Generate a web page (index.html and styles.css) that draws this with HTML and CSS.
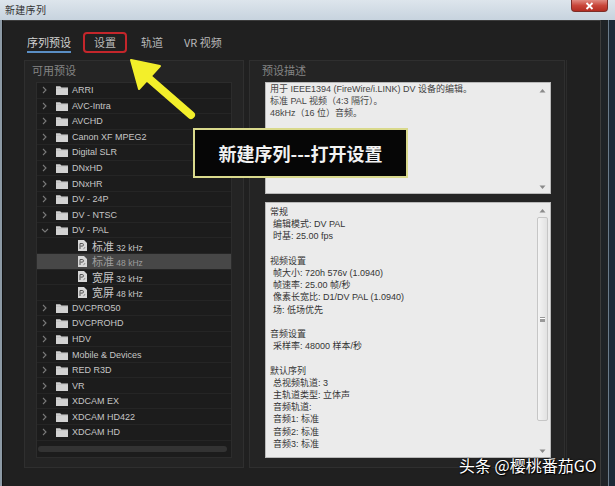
FILE: index.html
```html
<!DOCTYPE html>
<html lang="zh">
<head>
<meta charset="utf-8">
<title>新建序列</title>
<link rel="stylesheet" href="styles.css">
</head>
<body>
<svg class="defs" width="0" height="0" aria-hidden="true">
  <symbol id="chev" viewBox="0 0 5 8"><polyline points="1,1 4,4 1,7" fill="none" stroke="#7a7a7a" stroke-width="1.1"/></symbol>
  <symbol id="chevd" viewBox="0 0 8 5"><polyline points="1,1 4,4 7,1" fill="none" stroke="#7a7a7a" stroke-width="1.1"/></symbol>
  <symbol id="folder" viewBox="0 0 12 10"><path d="M0 1.2h4.2l1.2 1.3H12V10H0z" fill="#d2d2d2"/><path d="M0 3.4h12" stroke="#b8b8b8" stroke-width="0.6"/></symbol>
  <symbol id="file" viewBox="0 0 9 11"><path d="M0 0h6l3 3v8H0z" fill="#d8d8d8"/><path d="M2 9V3.5h2.2a1.3 1.3 0 0 1 0 2.6H2.4" fill="none" stroke="#555" stroke-width="1"/><path d="M5.5 9.2l1.6-2.2" stroke="#777" stroke-width="0.8"/></symbol>
  <symbol id="up" viewBox="0 0 7 5"><path d="M0.5 4.5L3.5 1l3 3.5z" fill="#8a8a8a"/></symbol>
  <symbol id="down" viewBox="0 0 7 5"><path d="M0.5 0.5L3.5 4l3-3.5z" fill="#8a8a8a"/></symbol>
</svg>

<div class="titlebar">
  <span class="title">新建序列</span>
  <span class="close"><svg width="9" height="8" viewBox="0 0 9 8"><path d="M1.5 1l6 6M7.5 1l-6 6" stroke="#fff" stroke-width="1.8"/></svg></span>
</div>

<div class="frame">
  <div class="lframe"></div>
  <div class="dialog">
    <nav class="tabs">
      <span class="tab active"><span class="ul">序列预设</span></span>
      <span class="tab boxed">设置</span>
      <span class="tab t3">轨道</span>
      <span class="tab t4">VR 视频</span>
    </nav>

    <div class="content">
      <section class="panel left">
        <div class="plabel">可用预设</div>
        <div class="tree">
          <div class="row"><svg class="chev"><use href="#chev"/></svg><svg class="fold"><use href="#folder"/></svg><span>ARRI</span></div>
          <div class="row"><svg class="chev"><use href="#chev"/></svg><svg class="fold"><use href="#folder"/></svg><span>AVC-Intra</span></div>
          <div class="row"><svg class="chev"><use href="#chev"/></svg><svg class="fold"><use href="#folder"/></svg><span>AVCHD</span></div>
          <div class="row"><svg class="chev"><use href="#chev"/></svg><svg class="fold"><use href="#folder"/></svg><span>Canon XF MPEG2</span></div>
          <div class="row"><svg class="chev"><use href="#chev"/></svg><svg class="fold"><use href="#folder"/></svg><span>Digital SLR</span></div>
          <div class="row"><svg class="chev"><use href="#chev"/></svg><svg class="fold"><use href="#folder"/></svg><span>DNxHD</span></div>
          <div class="row"><svg class="chev"><use href="#chev"/></svg><svg class="fold"><use href="#folder"/></svg><span>DNxHR</span></div>
          <div class="row"><svg class="chev"><use href="#chev"/></svg><svg class="fold"><use href="#folder"/></svg><span>DV - 24P</span></div>
          <div class="row"><svg class="chev"><use href="#chev"/></svg><svg class="fold"><use href="#folder"/></svg><span>DV - NTSC</span></div>
          <div class="row"><svg class="chevd"><use href="#chevd"/></svg><svg class="fold"><use href="#folder"/></svg><span>DV - PAL</span></div>
          <div class="row child"><svg class="file"><use href="#file"/></svg><span><b>标准</b> 32 kHz</span></div>
          <div class="row child sel"><svg class="file"><use href="#file"/></svg><span><b>标准</b> 48 kHz</span></div>
          <div class="row child"><svg class="file"><use href="#file"/></svg><span><b>宽屏</b> 32 kHz</span></div>
          <div class="row child"><svg class="file"><use href="#file"/></svg><span><b>宽屏</b> 48 kHz</span></div>
          <div class="row"><svg class="chev"><use href="#chev"/></svg><svg class="fold"><use href="#folder"/></svg><span>DVCPRO50</span></div>
          <div class="row"><svg class="chev"><use href="#chev"/></svg><svg class="fold"><use href="#folder"/></svg><span>DVCPROHD</span></div>
          <div class="row"><svg class="chev"><use href="#chev"/></svg><svg class="fold"><use href="#folder"/></svg><span>HDV</span></div>
          <div class="row"><svg class="chev"><use href="#chev"/></svg><svg class="fold"><use href="#folder"/></svg><span>Mobile &amp; Devices</span></div>
          <div class="row"><svg class="chev"><use href="#chev"/></svg><svg class="fold"><use href="#folder"/></svg><span>RED R3D</span></div>
          <div class="row"><svg class="chev"><use href="#chev"/></svg><svg class="fold"><use href="#folder"/></svg><span>VR</span></div>
          <div class="row"><svg class="chev"><use href="#chev"/></svg><svg class="fold"><use href="#folder"/></svg><span>XDCAM EX</span></div>
          <div class="row"><svg class="chev"><use href="#chev"/></svg><svg class="fold"><use href="#folder"/></svg><span>XDCAM HD422</span></div>
          <div class="row"><svg class="chev"><use href="#chev"/></svg><svg class="fold"><use href="#folder"/></svg><span>XDCAM HD</span></div>
          <div class="hscroll"></div>
        </div>
      </section>

      <section class="panel right">
        <div class="plabel">预设描述</div>
        <div class="box desc">
          <div class="text">
            <p>用于 IEEE1394 (FireWire/i.LINK) DV 设备的编辑。</p>
            <p>标准 PAL 视频（4:3 隔行）。</p>
            <p>48kHz（16 位）音频。</p>
          </div>
          <div class="vscroll plain">
            <svg class="arr"><use href="#up"/></svg>
            <svg class="arr"><use href="#down"/></svg>
          </div>
        </div>
        <div class="box details">
          <div class="text">
            <p>常规</p>
            <p class="in">编辑模式: DV PAL</p>
            <p class="in">时基: 25.00 fps</p>
            <p class="gap"></p>
            <p>视频设置</p>
            <p class="in">帧大小: 720h 576v (1.0940)</p>
            <p class="in">帧速率: 25.00 帧/秒</p>
            <p class="in">像素长宽比: D1/DV PAL (1.0940)</p>
            <p class="in">场: 低场优先</p>
            <p class="gap"></p>
            <p>音频设置</p>
            <p class="in">采样率: 48000 样本/秒</p>
            <p class="gap"></p>
            <p>默认序列</p>
            <p class="in">总视频轨道: 3</p>
            <p class="in">主轨道类型: 立体声</p>
            <p class="in">音频轨道:</p>
            <p class="in">音频1: 标准</p>
            <p class="in">音频2: 标准</p>
            <p class="in">音频3: 标准</p>
          </div>
          <div class="vscroll">
            <svg class="arr"><use href="#up"/></svg>
            <div class="thumb"><span class="grip"></span></div>
            <svg class="arr"><use href="#down"/></svg>
          </div>
        </div>
      </section>
      <div class="side"></div>
    </div>
  </div>
  <div class="rframe"></div>
</div>

<div class="callout">新建序列---打开设置</div>
<svg class="arrow" width="80" height="75" viewBox="0 0 80 75">
  <path d="M70 64L24 24" stroke="#f3ef2a" stroke-width="8" stroke-linecap="round"/>
  <path d="M10 9L39 15L18 38Z" fill="#f3ef2a" stroke="#f3ef2a" stroke-width="2" stroke-linejoin="round"/>
</svg>
<div class="watermark">头条 @樱桃番茄GO</div>
</body>
</html>
```

FILE: styles.css
```css
* { box-sizing: border-box; margin: 0; padding: 0; }
html, body { width: 615px; height: 486px; overflow: hidden; }
body {
  position: relative;
  background: #1c2530;
  font-family: "Liberation Sans", "Noto Sans CJK SC", sans-serif;
  color: #c4c4c4;
}
.defs { position: absolute; width: 0; height: 0; }

/* title bar */
.titlebar {
  height: 20px;
  display: flex;
  justify-content: space-between;
  align-items: flex-start;
  padding-left: 5px;
  background: linear-gradient(#dde5ec, #c7d3de);
}
.title {
  font-family: "Noto Sans CJK SC", sans-serif;
  font-size: 10px;
  line-height: 20px;
  color: #333;
  letter-spacing: 0.3px;
}
.close {
  width: 37px;
  height: 12px;
  margin-right: 7px;
  display: flex;
  align-items: center;
  justify-content: center;
  background: linear-gradient(#e08a80, #c9463a 50%, #b32d22);
  border: 1px solid #7d2e28;
  border-top: none;
  border-radius: 0 0 4px 4px;
}

/* frame */
.frame { display: flex; height: 466px; }
.lframe { width: 3px; background: #8d9aa6; border-right: 1px solid #111; }
.rframe {
  width: 15px;
  background: #1f2327;
  border-left: 1px solid #3c3c3c;
  box-shadow: inset -6px 0 0 #1d2a37, inset -7px 0 0 #6b7c8c;
}
.dialog {
  flex: 1;
  background: #202020;
  border-top: 1px solid #3d3d3d;
  padding: 11px 0 0 21px;
}

/* tabs */
.tabs {
  display: flex;
  height: 21px;
  font-family: "Noto Sans CJK SC", sans-serif;
  font-size: 11px;
  color: #b8b8b8;
}
.tab { padding: 0 3px; line-height: 20px; }
.tab.active { color: #d2d2d2; }
.ul { display: inline-block; height: 21px; border-bottom: 2px solid #5a8ec4; }
.boxed {
  margin-left: 9px;
  width: 44px;
  text-align: center;
  border: 2px solid #c4262b;
  border-radius: 4px;
  line-height: 17px;
  padding: 0;
}
.t3 { margin-left: 11px; }
.t4 { margin-left: 15px; }

/* content */
.content {
  margin-top: 7px;
  display: grid;
  grid-template-columns: 220px 316px 1fr;
  column-gap: 5px;
  height: 408px;
}
.panel {
  background: #242424;
  border: 1px solid #2f2f2f;
}
.side { border-left: 1px solid #2c2c2c; margin-left: -4px; }
.plabel {
  height: 21px;
  line-height: 16px;
  padding-top: 1px;
  font-family: "Noto Sans CJK SC", sans-serif;
  font-size: 11px;
  color: #858585;
}
.left .plabel { padding-left: 7px; }
.right .plabel { padding-left: 12px; }

/* tree */
.tree {
  margin-left: 11px;
  width: 196px;
  height: 376px;
  background: #1c1c1c;
  border: 1px solid #2c2c2c;
  display: flex;
  flex-direction: column;
}
.row {
  height: 15.55px;
  flex: none;
  display: flex;
  align-items: center;
  border-bottom: 1px solid #252525;
  font-size: 9px;
  color: #c6c6c6;
  white-space: nowrap;
}
.chev { width: 5px; height: 8px; margin-left: 5px; margin-right: 9px; }
.chevd { width: 8px; height: 5px; margin-left: 4px; margin-right: 7px; }
.fold { width: 12px; height: 10px; margin-right: 4px; }
.child .file { width: 9px; height: 11px; margin-left: 41px; margin-right: 5px; }
.child b {
  font-weight: normal;
  font-family: "Noto Sans CJK SC", sans-serif;
  font-size: 11px;
}
.child span { font-size: 8.5px; }
.sel { background: #474747; color: #9c9c9c; }
.hscroll {
  margin: auto 4px 5px 1px;
  height: 6px;
  border-radius: 3px;
  background: #333;
}

/* right boxes */
.box {
  margin-left: 15px;
  width: 286px;
  background: #ebebeb;
  border: 1px solid #b9b9b9;
  display: flex;
  color: #353535;
  font-size: 9px;
  line-height: 12.2px;
}
.box .text { flex: 1; padding: 0 0 0 4px; white-space: nowrap; }
.desc { height: 112px; }
.desc .text { line-height: 12px; color: #444; }
.details { height: 256px; margin-top: 8px; }
.details .text { padding-top: 3px; }
.details .in { padding-left: 3px; }
.gap { height: 12.2px; }
.vscroll {
  width: 14px;
  display: flex;
  flex-direction: column;
  align-items: center;
  justify-content: space-between;
  padding: 5px 2px 3px 0;
}
.arr { width: 7px; height: 5px; flex: none; }
.thumb {
  flex: 1;
  width: 11px;
  margin: 4px 0 28px;
  background: linear-gradient(90deg, #f4f4f4, #e2e2e2);
  border: 1px solid #c6c6c6;
  border-radius: 2px;
  display: flex;
  align-items: center;
  justify-content: center;
}
.grip {
  width: 5px;
  height: 5px;
  border-top: 1px solid #999;
  border-bottom: 1px solid #999;
  box-shadow: inset 0 1px 0 #fff, inset 0 -2px 0 #999;
}

/* overlays */
.callout {
  position: absolute;
  left: 193px;
  top: 128px;
  width: 215px;
  height: 50px;
  background: #060606;
  border: 2px solid #d9d98c;
  color: #f2f2f2;
  font-family: "Noto Sans CJK SC", sans-serif;
  font-weight: bold;
  font-size: 18px;
  display: flex;
  align-items: center;
  justify-content: center;
}
.arrow { position: absolute; left: 121px; top: 51px; }
.watermark {
  position: absolute;
  left: 459px;
  top: 455px;
  font-family: "Noto Sans CJK SC", sans-serif;
  font-size: 16px;
  line-height: 20px;
  color: #fff;
  text-shadow: 0 0 2px #000, 1px 1px 1px #000;
}
```
